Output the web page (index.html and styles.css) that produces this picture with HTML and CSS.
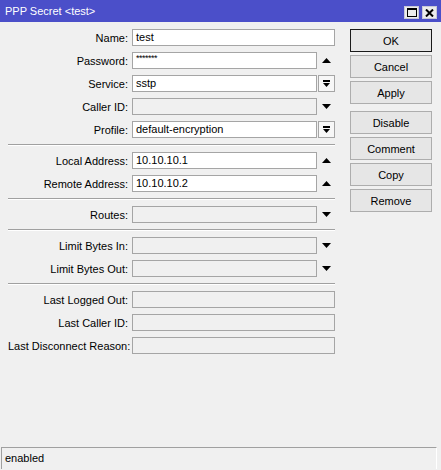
FILE: index.html
```html
<!DOCTYPE html>
<html>
<head>
<meta charset="utf-8">
<title>PPP Secret</title>
<link rel="stylesheet" href="styles.css">
</head>
<body>
<div class="window">
  <div class="titlebar">
    <span class="title">PPP Secret &lt;test&gt;</span>
    <div class="tb-buttons">
      <span class="tb-btn">
        <svg width="10" height="9" viewBox="0 0 10 9"><rect x="0.5" y="0.5" width="9" height="8" fill="none" stroke="#000"/><rect x="0" y="0" width="10" height="2" fill="#000"/></svg>
      </span>
      <span class="tb-btn">
        <svg width="9" height="8" viewBox="0 0 9 8"><path d="M1 0.5 L8 7.5 M8 0.5 L1 7.5" stroke="#000" stroke-width="2"/></svg>
      </span>
    </div>
  </div>

  <div class="content">
    <div class="form">
      <div class="row"><label>Name:</label><div class="field"><div class="input">test</div></div></div>
      <div class="row"><label>Password:</label><div class="field"><div class="input pw">*******</div><span class="arrow"><svg width="9" height="5" viewBox="0 0 9 5"><path d="M0 5 L4.5 0 L9 5Z"/></svg></span></div></div>
      <div class="row"><label>Service:</label><div class="field"><div class="input">sstp</div><span class="drop"><svg width="9" height="8" viewBox="0 0 9 8"><rect x="1" y="0" width="7" height="2"/><path d="M1 3 L8 3 L4.5 7Z"/></svg></span></div></div>
      <div class="row"><label>Caller ID:</label><div class="field"><div class="input off"></div><span class="arrow"><svg width="9" height="5" viewBox="0 0 9 5"><path d="M0 0 L9 0 L4.5 5Z"/></svg></span></div></div>
      <div class="row"><label>Profile:</label><div class="field"><div class="input">default-encryption</div><span class="drop"><svg width="9" height="8" viewBox="0 0 9 8"><rect x="1" y="0" width="7" height="2"/><path d="M1 3 L8 3 L4.5 7Z"/></svg></span></div></div>

      <div class="sep"></div>

      <div class="row"><label>Local Address:</label><div class="field"><div class="input">10.10.10.1</div><span class="arrow"><svg width="9" height="5" viewBox="0 0 9 5"><path d="M0 5 L4.5 0 L9 5Z"/></svg></span></div></div>
      <div class="row"><label>Remote Address:</label><div class="field"><div class="input">10.10.10.2</div><span class="arrow"><svg width="9" height="5" viewBox="0 0 9 5"><path d="M0 5 L4.5 0 L9 5Z"/></svg></span></div></div>

      <div class="sep"></div>

      <div class="row"><label>Routes:</label><div class="field"><div class="input off"></div><span class="arrow"><svg width="9" height="5" viewBox="0 0 9 5"><path d="M0 0 L9 0 L4.5 5Z"/></svg></span></div></div>

      <div class="sep"></div>

      <div class="row"><label>Limit Bytes In:</label><div class="field"><div class="input off"></div><span class="arrow"><svg width="9" height="5" viewBox="0 0 9 5"><path d="M0 0 L9 0 L4.5 5Z"/></svg></span></div></div>
      <div class="row"><label>Limit Bytes Out:</label><div class="field"><div class="input off"></div><span class="arrow"><svg width="9" height="5" viewBox="0 0 9 5"><path d="M0 0 L9 0 L4.5 5Z"/></svg></span></div></div>

      <div class="sep"></div>

      <div class="row"><label>Last Logged Out:</label><div class="field"><div class="input off"></div></div></div>
      <div class="row"><label>Last Caller ID:</label><div class="field"><div class="input off"></div></div></div>
      <div class="row"><label>Last Disconnect Reason:</label><div class="field"><div class="input off"></div></div></div>
    </div>

    <div class="buttons">
      <div class="btn default">OK</div>
      <div class="btn">Cancel</div>
      <div class="btn">Apply</div>
      <div class="btn group">Disable</div>
      <div class="btn">Comment</div>
      <div class="btn">Copy</div>
      <div class="btn">Remove</div>
    </div>
  </div>

  <div class="statusbar">enabled</div>
</div>
</body>
</html>
```

FILE: styles.css
```css
html, body {
  margin: 0;
  padding: 0;
}

body {
  width: 441px;
  height: 470px;
  overflow: hidden;
  background: #f0f0f0;
  color: #000;
  font-family: "Liberation Sans", Arial, sans-serif;
  font-size: 11px;
}

.window {
  display: flex;
  flex-direction: column;
  height: 470px;
}

/* window caption */
.titlebar {
  height: 22px;
  flex: none;
  background: #4b4fc9;
  color: #fff;
  display: flex;
  align-items: center;
  justify-content: space-between;
  padding: 0 4px 0 5px;
}

.title {
  font-size: 11px;
}

.tb-buttons {
  display: flex;
  gap: 3px;
  margin-top: 3px;
}

.tb-btn {
  width: 15px;
  height: 13px;
  box-sizing: border-box;
  background: #ececec;
  border: 1px solid #c8c8d8;
  display: flex;
  align-items: center;
  justify-content: center;
}

/* dialog body */
.content {
  flex: 1;
  display: flex;
  align-items: flex-start;
  padding-top: 7px;
}

.form {
  width: 327px;
  margin-left: 8px;
  display: flex;
  flex-direction: column;
  gap: 6px;
}

.row {
  display: grid;
  grid-template-columns: 120px 203px;
  column-gap: 4px;
  align-items: center;
  height: 17px;
}

.row label {
  text-align: right;
  white-space: nowrap;
}

.field {
  display: flex;
  height: 17px;
}

.input {
  flex: 1;
  box-sizing: border-box;
  height: 17px;
  border: 1px solid #a5a5a5;
  background: #fff;
  padding: 0 3px;
  line-height: 15px;
  white-space: nowrap;
  overflow: hidden;
}

.input.off {
  background: #f0f0f0;
}

.input.pw {
  font-size: 9px;
  line-height: 11px;
  letter-spacing: -0.5px;
}

.arrow {
  width: 18px;
  flex: none;
  display: flex;
  align-items: center;
  justify-content: center;
}

.drop {
  width: 17px;
  margin-left: 1px;
  flex: none;
  box-sizing: border-box;
  border: 1px solid #a5a5a5;
  background: #f7f7f7;
  display: flex;
  align-items: center;
  justify-content: center;
}

.sep {
  height: 0;
  border-top: 1px solid #a0a0a0;
  border-bottom: 1px solid #fff;
}

/* command buttons */
.buttons {
  width: 82px;
  margin-left: 15px;
  display: flex;
  flex-direction: column;
  gap: 3px;
}

.btn {
  height: 23px;
  box-sizing: border-box;
  border: 1px solid #adadad;
  background: #e6e6e6;
  display: flex;
  align-items: center;
  justify-content: center;
}

.btn.default {
  border-color: #1a1a1a;
}

.btn.group {
  margin-top: 4px;
}

/* status line */
.statusbar {
  flex: none;
  height: 22px;
  box-sizing: border-box;
  margin: 0 4px 1px 1px;
  border-top: 1px solid #a0a0a0;
  border-left: 1px solid #a0a0a0;
  border-right: 1px solid #fff;
  padding-left: 3px;
  line-height: 20px;
}
```
